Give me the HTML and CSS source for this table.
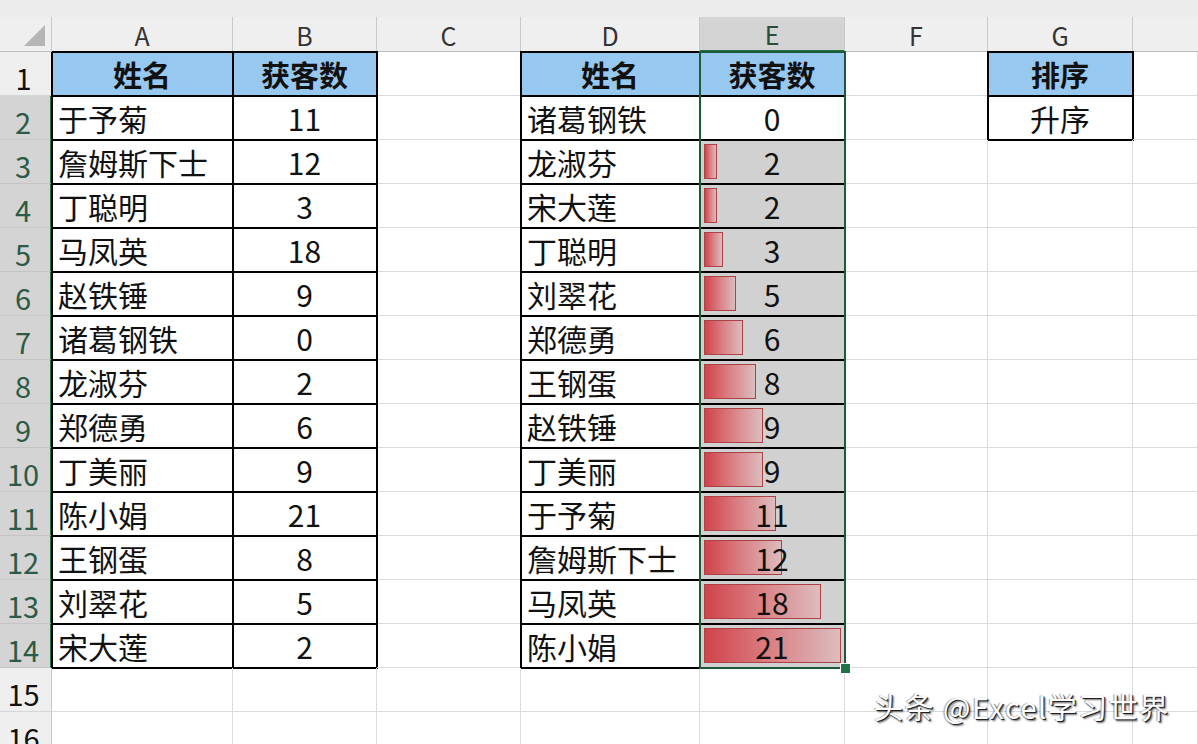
FILE: index.html
```html
<!DOCTYPE html>
<html lang="zh">
<head>
<meta charset="utf-8">
<link rel="stylesheet" href="styles.css">
</head>
<body>
<div class="topbar"></div>
<div class="sheet">
  <div class="ch corner"><span class="tri"></span></div>
  <div class="ch">A</div><div class="ch">B</div><div class="ch">C</div><div class="ch">D</div><div class="ch sel">E</div><div class="ch">F</div><div class="ch">G</div><div class="ch last"></div>

  <!-- row 1 -->
  <div class="rh">1</div>
  <div class="c t hd">姓名</div><div class="c t hd">获客数</div><div class="c"></div>
  <div class="c t hd">姓名</div><div class="c t hd">获客数</div><div class="c"></div>
  <div class="c t hd">排序</div><div class="c"></div>

  <!-- row 2 -->
  <div class="rh sel">2</div>
  <div class="c t l">于予菊</div><div class="c t n">11</div><div class="c"></div>
  <div class="c t l">诸葛钢铁</div><div class="c t n">0</div><div class="c"></div>
  <div class="c t n">升序</div><div class="c"></div>

  <!-- row 3 -->
  <div class="rh sel">3</div>
  <div class="c t l">詹姆斯下士</div><div class="c t n">12</div><div class="c"></div>
  <div class="c t l">龙淑芬</div><div class="c t n g"><span class="bar" style="width:13px"></span><span class="v">2</span></div><div class="c"></div>
  <div class="c"></div><div class="c"></div>

  <!-- row 4 -->
  <div class="rh sel">4</div>
  <div class="c t l">丁聪明</div><div class="c t n">3</div><div class="c"></div>
  <div class="c t l">宋大莲</div><div class="c t n g"><span class="bar" style="width:13px"></span><span class="v">2</span></div><div class="c"></div>
  <div class="c"></div><div class="c"></div>

  <!-- row 5 -->
  <div class="rh sel">5</div>
  <div class="c t l">马凤英</div><div class="c t n">18</div><div class="c"></div>
  <div class="c t l">丁聪明</div><div class="c t n g"><span class="bar" style="width:19px"></span><span class="v">3</span></div><div class="c"></div>
  <div class="c"></div><div class="c"></div>

  <!-- row 6 -->
  <div class="rh sel">6</div>
  <div class="c t l">赵铁锤</div><div class="c t n">9</div><div class="c"></div>
  <div class="c t l">刘翠花</div><div class="c t n g"><span class="bar" style="width:32px"></span><span class="v">5</span></div><div class="c"></div>
  <div class="c"></div><div class="c"></div>

  <!-- row 7 -->
  <div class="rh sel">7</div>
  <div class="c t l">诸葛钢铁</div><div class="c t n">0</div><div class="c"></div>
  <div class="c t l">郑德勇</div><div class="c t n g"><span class="bar" style="width:39px"></span><span class="v">6</span></div><div class="c"></div>
  <div class="c"></div><div class="c"></div>

  <!-- row 8 -->
  <div class="rh sel">8</div>
  <div class="c t l">龙淑芬</div><div class="c t n">2</div><div class="c"></div>
  <div class="c t l">王钢蛋</div><div class="c t n g"><span class="bar" style="width:52px"></span><span class="v">8</span></div><div class="c"></div>
  <div class="c"></div><div class="c"></div>

  <!-- row 9 -->
  <div class="rh sel">9</div>
  <div class="c t l">郑德勇</div><div class="c t n">6</div><div class="c"></div>
  <div class="c t l">赵铁锤</div><div class="c t n g"><span class="bar" style="width:59px"></span><span class="v">9</span></div><div class="c"></div>
  <div class="c"></div><div class="c"></div>

  <!-- row 10 -->
  <div class="rh sel">10</div>
  <div class="c t l">丁美丽</div><div class="c t n">9</div><div class="c"></div>
  <div class="c t l">丁美丽</div><div class="c t n g"><span class="bar" style="width:59px"></span><span class="v">9</span></div><div class="c"></div>
  <div class="c"></div><div class="c"></div>

  <!-- row 11 -->
  <div class="rh sel">11</div>
  <div class="c t l">陈小娟</div><div class="c t n">21</div><div class="c"></div>
  <div class="c t l">于予菊</div><div class="c t n g"><span class="bar" style="width:72px"></span><span class="v">11</span></div><div class="c"></div>
  <div class="c"></div><div class="c"></div>

  <!-- row 12 -->
  <div class="rh sel">12</div>
  <div class="c t l">王钢蛋</div><div class="c t n">8</div><div class="c"></div>
  <div class="c t l">詹姆斯下士</div><div class="c t n g"><span class="bar" style="width:78px"></span><span class="v">12</span></div><div class="c"></div>
  <div class="c"></div><div class="c"></div>

  <!-- row 13 -->
  <div class="rh sel">13</div>
  <div class="c t l">刘翠花</div><div class="c t n">5</div><div class="c"></div>
  <div class="c t l">马凤英</div><div class="c t n g"><span class="bar" style="width:117px"></span><span class="v">18</span></div><div class="c"></div>
  <div class="c"></div><div class="c"></div>

  <!-- row 14 -->
  <div class="rh sel">14</div>
  <div class="c t l">宋大莲</div><div class="c t n">2</div><div class="c"></div>
  <div class="c t l">陈小娟</div><div class="c t n g"><span class="bar" style="width:137px"></span><span class="v">21</span></div><div class="c"></div>
  <div class="c"></div><div class="c"></div>

  <!-- row 15 -->
  <div class="rh">15</div>
  <div class="c"></div><div class="c"></div><div class="c"></div><div class="c"></div><div class="c"></div><div class="c"></div><div class="c"></div><div class="c"></div>

  <!-- row 16 -->
  <div class="rh">16</div>
  <div class="c"></div><div class="c"></div><div class="c"></div><div class="c"></div><div class="c"></div><div class="c"></div><div class="c"></div><div class="c"></div>

  <div class="selection"><span class="handle"></span></div>
</div>
<div class="watermark">头条 @Excel学习世界</div>
</body>
</html>
```
FILE: styles.css
```css
* { box-sizing: border-box; }
html, body {
  margin: 0;
  padding: 0;
  background: #ffffff;
  width: 1198px;
  height: 744px;
  overflow: hidden;
  font-family: "Noto Sans CJK SC", "Noto Sans", sans-serif;
  color: #111;
}
.topbar {
  height: 17px;
  background: #ececec;
}
.sheet {
  display: grid;
  grid-template-columns: 52px 181px 144px 144px 179px 145px 143px 145px 1fr;
  grid-template-rows: 35px repeat(16, 44px);
  position: relative;
}
.ch {
  background: #efefef;
  border-right: 1px solid #c9c9c9;
  border-bottom: 1px solid #bdbdbd;
  display: flex;
  align-items: flex-end;
  justify-content: center;
  font-size: 25px;
  line-height: 32px;
  color: #333;
}
.ch.last { border-right: none; }
.ch.sel {
  background: #d4d4d4;
  border-bottom: 2px solid #217346;
  color: #2a4d3a;
}
.corner { position: relative; }
.tri {
  position: absolute;
  right: 6px;
  bottom: 5px;
  width: 0;
  height: 0;
  border-left: 21px solid transparent;
  border-bottom: 21px solid #b5b5b5;
}
.rh {
  background: #efefef;
  border-right: 1px solid #c9c9c9;
  border-bottom: 1px solid #d6d6d6;
  display: flex;
  align-items: flex-end;
  justify-content: center;
  font-size: 29px;
  line-height: 36px;
  padding-right: 4px;
  color: #111;
}
.rh.sel {
  background: #d4d4d4;
  color: #2c5a45;
  border-bottom-color: #c4c4c4;
  border-right: 2px solid #217346;
}
.c {
  border-right: 1px solid #dadada;
  border-bottom: 1px solid #dadada;
  display: flex;
  align-items: flex-end;
  font-size: 30px;
  line-height: 38px;
  padding-bottom: 2px;
  white-space: nowrap;
  overflow: hidden;
}
.t {
  outline: 2px solid #000;
  outline-offset: -1px;
  border-color: transparent;
}
.hd {
  background: #97c8ef;
  font-weight: bold;
  justify-content: center;
  font-size: 29px;
}
.l { padding-left: 6px; }
.n { justify-content: center; }
.g {
  background: #d1d1d1;
  position: relative;
}
.bar {
  position: absolute;
  left: 4px;
  top: 4px;
  bottom: 4px;
  border: 1px solid #ad4246;
  background: linear-gradient(to right, #d0434a 0%, #da8286 50%, #dcbcbe 100%);
}
.v { position: relative; }
.selection {
  position: absolute;
  grid-column: 6 / 7;
  grid-row: 2 / 16;
  top: -1px;
  left: -1px;
  right: -1px;
  bottom: -1px;
  border: 2px solid #1c5a3a;
  z-index: 2;
  pointer-events: none;
}
.handle {
  position: absolute;
  right: -7px;
  bottom: -7px;
  width: 11px;
  height: 11px;
  background: #217346;
  border: 1px solid #fff;
}
.watermark {
  position: absolute;
  left: 874px;
  top: 685px;
  font-size: 29px;
  letter-spacing: 1.5px;
  color: #fff;
  text-shadow: 1px 1px 0 #222, 2px 2px 2px rgba(0,0,0,0.6), -1px 0 1px rgba(0,0,0,0.4);
  z-index: 5;
  white-space: nowrap;
}
```
